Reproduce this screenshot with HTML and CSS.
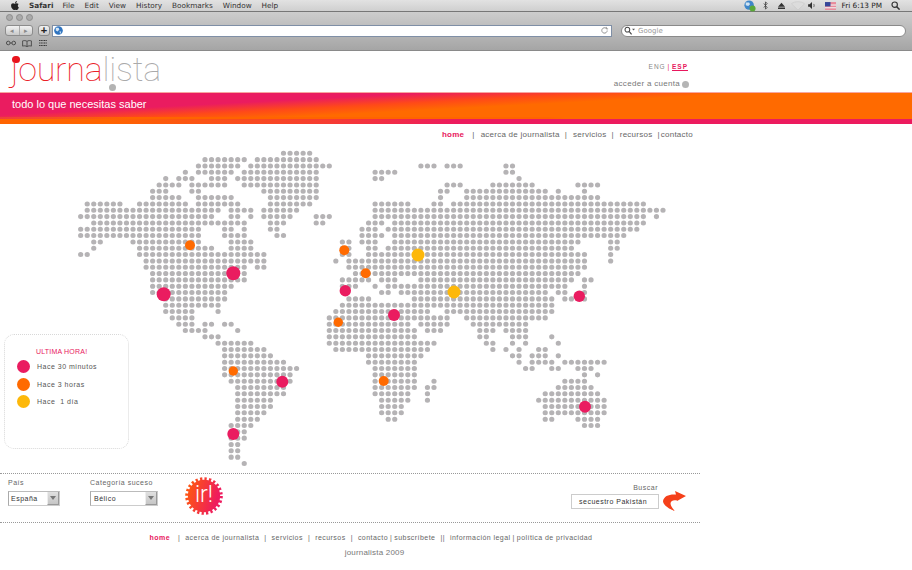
FILE: index.html
```html
<!DOCTYPE html>
<html lang="es">
<head>
<meta charset="utf-8">
<title>journalista</title>
<link rel="stylesheet" href="styles.css">
</head>
<body>
<div class="menubar">
  <svg class="apple" viewBox="0 0 14 16"><path d="M10.4 0c.1 1.1-.3 2-.9 2.700-.6.7-1.500 1.200-2.400 1.100-.1-1 .4-2 .9-2.600C8.600.6 9.600.1 10.400 0zM13.500 5.500c-1 .7-1.500 1.600-1.500 2.800 0 1.400.8 2.500 2 3-.3 1-.8 1.900-1.400 2.800-.8 1.100-1.500 1.900-2.500 1.900s-1.400-.6-2.600-.6-1.700.6-2.600.6c-1 0-1.800-1-2.600-2.100C.8 12.300 0 10.200 0 8.300c0-2.700 1.800-4.200 3.500-4.200 1.100 0 2 .7 2.700.7.700 0 1.700-.8 3-.8 1.600 0 3.300.7 4.300 1.500z"/></svg>
  <span class="menu-app">Safari</span>
  <span class="menu-item">File</span>
  <span class="menu-item">Edit</span>
  <span class="menu-item">View</span>
  <span class="menu-item">History</span>
  <span class="menu-item">Bookmarks</span>
  <span class="menu-item">Window</span>
  <span class="menu-item">Help</span>
  <div class="status">
    <svg class="st-globe" viewBox="0 0 14 14"><circle cx="6" cy="6" r="5.500" fill="#3f86c9"/><path d="M2 3h4l1 2-2 2-3-1zM7 8h3l-1 3-2-1z" fill="#cfe3f2"/><circle cx="10" cy="10" r="3.500" fill="#5aa83a"/></svg>
    <svg class="st-bt" viewBox="0 0 6 11"><path d="M1 3l4 5-2 2V1l2 2-4 5" fill="none" stroke="#444" stroke-width="1"/></svg>
    <svg class="st-eject" viewBox="0 0 9 9"><path d="M4.500 1L9 6H0zM0 7h9v2H0z" fill="#333"/></svg>
    <svg class="st-wifi" viewBox="0 0 16 11"><path d="M0 3.500C4 0 12 0 16 3.500L8 11z" fill="#dcdcdc" stroke="#c4c4c4" stroke-width=".6"/></svg>
    <svg class="st-vol" viewBox="0 0 10 9"><path d="M0 3h2l3-3v9L2 6H0z" fill="#333"/><path d="M7 2.500c1 1 1 3 0 4" fill="none" stroke="#444"/></svg>
    <svg class="st-flag" viewBox="0 0 14 10"><rect width="14" height="10" fill="#e88a9a"/><rect y="3" width="14" height="1.500" fill="#eee"/><rect y="6.500" width="14" height="1.500" fill="#eee"/><rect width="7" height="5.500" fill="#35479a"/></svg>
    <span class="st-clock">Fri 6:13 PM</span>
    <svg class="st-search" viewBox="0 0 11 11"><circle cx="4.500" cy="4.500" r="3.300" fill="none" stroke="#333" stroke-width="1.400"/><path d="M7 7l3.500 3.500" stroke="#333" stroke-width="1.800"/></svg>
  </div>
</div>

<div class="toolbar">
  <div class="lights"><i class="light"></i><i class="light"></i><i class="light"></i></div>
  <div class="address-row">
    <div class="nav-btns"><span class="nav-btn">◂</span><span class="nav-btn">▸</span></div>
    <span class="add-btn">+</span>
    <div class="url">
      <svg class="url-globe" viewBox="0 0 10 10"><circle cx="5" cy="5" r="4.800" fill="#2f74c0"/><path d="M2 2h3l1 2-2 2-2-1zM6 6h2l-1 3z" fill="#d5e6f5"/></svg>
      <svg class="url-reload" viewBox="0 0 10 10"><path d="M8 5a3 3 0 1 1-1-2.300M7 1v2.200H9" fill="none" stroke="#8a8a8a" stroke-width="1"/></svg>
    </div>
    <div class="search-field">
      <svg class="search-mag" viewBox="0 0 13 10"><circle cx="4" cy="4" r="2.800" fill="none" stroke="#444" stroke-width="1.200"/><path d="M6 6l3 3.500" stroke="#444" stroke-width="1.400"/><path d="M9.500 3h3.500l-1.700 2z" fill="#555"/></svg>
      <span class="search-hint">Google</span>
    </div>
  </div>
  <div class="bookmarks-row">
    <svg class="bm-glasses" viewBox="0 0 11 6"><circle cx="2.500" cy="3" r="2" fill="none" stroke="#444"/><circle cx="8.500" cy="3" r="2" fill="none" stroke="#444"/><path d="M4.500 3h2" stroke="#444"/></svg>
    <svg class="bm-book" viewBox="0 0 11 8"><path d="M5.500 1.500C4 .5 2 .5.500 1v6c1.500-.5 3.500-.5 5 .5 1.500-1 3.500-1 5-.5V1c-1.500-.5-3.500-.5-5 .5zM5.500 1.500v6" fill="none" stroke="#444"/></svg>
    <svg class="bm-grid" viewBox="0 0 9 7"><path d="M0 .5h9M0 3.500h9M0 6.500h9" stroke="#333" stroke-width="1.400" stroke-dasharray="1.300 .6"/></svg>
  </div>
</div>

<header class="site-header">
  <a class="logo"><span class="logo-red">journa</span><span class="logo-grey">lista</span></a>
  <div class="account">
    <div class="langs"><span class="lang">ENG</span> <b class="lang-sep">|</b> <a class="lang-on">ESP</a></div>
    <div class="login">acceder a cuenta <i class="login-dot"></i></div>
  </div>
</header>

<div class="banner"><span class="tagline">todo lo que necesitas saber</span></div>

<nav class="main-nav">
  <a class="current">home</a><span class="sep first">|</span><a>acerca de journalista</a><span class="sep">|</span><a>servicios</a><span class="sep">|</span><a>recursos</a><span class="sep tight">|</span><a>contacto</a>
</nav>

<main class="map-area">
  <svg class="world" viewBox="0 0 912 327" aria-label="mapa del mundo">
    <g transform="translate(80.67 7.3) scale(6.543 6.33)">
      <path class="dots" d="M31 0H35.010
M19 1H25.010M27 1H36.010
M18 2H24.010M26 2H38.010M52 2H54.010M56 2H58.010M65 2H66.010
M16 3h.01M18 3H23.010M25 3H36.010M45 3H48.010M65 3H66.010
M13 4h.01M15 4H17.010M20 4H22.010M24 4H36.010M45 4H46.010M67 4h.01
M12 5H15.010M17 5H22.010M25 5H36.010M56 5H58.010M63 5H69.010M76 5H79.010
M11 6H13.010M17 6H18.010M28 6H36.010M55 6H56.010M59 6H71.010M73 6h.01M77 6h.01
M11 7H15.010M18 7H23.010M29 7H36.010M55 7h.01M59 7H79.010
M1 8H6.010M9 8H16.010M18 8H24.010M29 8H35.010M45 8H50.010M54 8H55.010M57 8H86.010
M1 9H21.010M23 9H26.010M28 9H33.010M45 9H89.010
M0 10H20.010M23 10H24.010M26 10h.01M28 10H32.010M36 10H38.010M45 10H86.010M88 10h.01
M2 11H25.010M29 11H31.010M36 11H37.010M44 11H46.010M48 11H86.010
M0 12H18.010M22 12H23.010M25 12h.01M29 12H30.010M43 12H45.010M47 12H85.010
M0 13H18.010M22 13H25.010M30 13H31.010M43 13H46.010M48 13H83.010
M2 14H3.010M8 14H18.010M23 14H26.010M40 14H41.010M43 14H45.010M48 14H76.010M81 14H82.010
M2 15h.01M9 15H20.010M23 15H26.010M40 15H41.010M44 15H45.010M47 15H75.010M81 15H82.010
M0 16H1.010M9 16H28.010M40 16H41.010M44 16H77.010M81 16h.01
M10 17H28.010M39 17h.01M41 17H77.010M81 17h.01
M10 18H25.010M27 18H28.010M41 18H77.010
M11 19H25.010M42 19H76.010
M11 20H25.010M40 20H44.010M46 20H48.010M52 20H75.010M77 20H78.010
M11 21H23.010M40 21H42.010M45 21h.01M47 21H74.010M77 21h.01
M11 22H22.010M46 22H47.010M49 22H71.010M73 22H74.010M77 22h.01
M13 23H22.010M41 23H44.010M51 23H72.010M74 23H75.010M77 23h.01
M13 24H21.010M40 24H72.010
M13 25H17.010M21 25h.01M39 25H53.010M56 25H72.010
M14 26H17.010M38 26H56.010M59 26H71.010
M15 27H17.010M19 27H20.010M22 27H23.010M38 27H50.010M52 27H56.010M60 27H68.010
M16 28H19.010M24 28h.01M38 28H51.010M53 28H55.010M61 28H63.010M65 28H68.010
M19 29H21.010M38 29H51.010M61 29H62.010M66 29H68.010M72 29h.01
M21 30H26.010M38 30H54.010M62 30H63.010M66 30h.01M68 30h.01M73 30h.01
M22 31H28.010M39 31H53.010M63 31h.01M65 31h.01M67 31h.01M70 31H71.010
M22 32H29.010M44 32H52.010M66 32H67.010M69 32H71.010M73 32h.01
M22 33H31.010M44 33H51.010M67 33h.01M69 33H72.010M74 33H80.010
M22 34H33.010M45 34H51.010M68 34H69.010M72 34H73.010M76 34H78.010
M22 35H32.010M45 35H51.010M77 35h.01M79 35h.01
M23 36H32.010M45 36H51.010M54 36h.01M74 36H77.010
M24 37H31.010M45 37H51.010M53 37H54.010M73 37H78.010
M24 38H31.010M45 38H50.010M53 38h.01M71 38H79.010
M24 39H29.010M46 39H50.010M53 39h.01M70 39H80.010
M24 40H29.010M46 40H49.010M71 40H80.010
M24 41H28.010M46 41H49.010M71 41H80.010
M24 42H27.010M47 42H48.010M71 42H72.010M76 42H79.010
M23 43H26.010M77 43H79.010
M23 44H25.010
M23 45H25.010
M23 46H24.010
M23 47H24.010
M23 48H24.010
M25 49h.01"/>
    </g>
    <g transform="translate(0 -146)">
      <circle class="pin-orange" cx="190" cy="245.300" r="5"/>
      <circle class="pin-red" cx="233.300" cy="273.300" r="7"/>
      <circle class="pin-red" cx="163.700" cy="294.300" r="7"/>
      <circle class="pin-orange" cx="344.300" cy="250.300" r="5"/>
      <circle class="pin-orange" cx="365.700" cy="273.300" r="5"/>
      <circle class="pin-red" cx="345.300" cy="290.700" r="5.700"/>
      <circle class="pin-yellow" cx="418" cy="255" r="6.500"/>
      <circle class="pin-yellow" cx="454" cy="292" r="6.500"/>
      <circle class="pin-red" cx="579.300" cy="296.300" r="5.700"/>
      <circle class="pin-red" cx="394" cy="315" r="6"/>
      <circle class="pin-orange" cx="338.300" cy="322.300" r="4.700"/>
      <circle class="pin-orange" cx="383.700" cy="381" r="5"/>
      <circle class="pin-red" cx="585" cy="406.700" r="6"/>
      <circle class="pin-orange" cx="233.300" cy="371" r="4.700"/>
      <circle class="pin-red" cx="282.300" cy="381.700" r="6"/>
      <circle class="pin-red" cx="233.300" cy="434" r="6"/>
    </g>
  </svg>
  <aside class="legend">
    <h2 class="legend-title">ULTIMA HORA!</h2>
    <div class="legend-row"><i class="swatch red"></i><span>Hace 30 minutos</span></div>
    <div class="legend-row"><i class="swatch orange"></i><span>Hace 3 horas</span></div>
    <div class="legend-row"><i class="swatch yellow"></i><span>Hace&nbsp; 1 día</span></div>
  </aside>
</main>

<section class="filters">
  <div class="field country">
    <label class="field-label">País</label>
    <div class="select"><span class="select-value">España</span><i class="select-btn"></i></div>
  </div>
  <div class="field category">
    <label class="field-label">Categoría suceso</label>
    <div class="select"><span class="select-value">Bélico</span><i class="select-btn"></i></div>
  </div>
  <div class="go">
    <svg class="burst" viewBox="0 0 40 40">
      <defs><linearGradient id="burstfill" x1="0" y1="0" x2="1" y2="0.300"><stop offset="0" stop-color="#ff5c0c"/><stop offset="1" stop-color="#ee1b5e"/></linearGradient></defs>
      <circle cx="20" cy="20" r="17" fill="url(#burstfill)"/>
      <circle cx="20" cy="20" r="18" fill="none" stroke="url(#burstfill)" stroke-width="3.600" stroke-dasharray="2.400 2.310"/>
    </svg>
    <span class="go-text">ir!</span>
  </div>
  <div class="search">
    <label class="search-label">Buscar</label>
    <div class="search-input">secuestro Pakistán</div>
  </div>
  <svg class="arrow" viewBox="0 0 28 24"><path d="M26 8L15 3l1 3.500C9 6 4 8 3 13c0 4 6 8 12 10-4-4-6-8-3-10 1-1 3-1 5-.5V13z" fill="#f5401a"/></svg>
</section>

<footer class="site-footer">
  <nav class="foot-nav"><a class="current">home</a><span class="sep first">|</span><a>acerca de journalista</a><span class="sep">|</span><a>servicios</a><span class="sep">|</span><a>recursos</a><span class="sep">|</span><a>contacto</a><span class="sep tight">|</span><a>subscríbete</a><span class="sep">||</span><a>información legal</a><span class="sep tight">|</span><a>política de privacidad</a></nav>
  <p class="copy">journalista 2009</p>
</footer>
</body>
</html>
```

FILE: styles.css
```css
* { box-sizing: border-box; }
html, body { margin: 0; padding: 0; background: #fff; }
body { width: 912px; height: 570px; overflow: hidden; font-family: "Liberation Sans", Arial, sans-serif; color: #555; }
a { color: inherit; text-decoration: none; }
i { display: block; }

/* mac menu bar */
.menubar { height: 12px; display: flex; align-items: center; background: linear-gradient(#e2e2e2, #cfcfcf); border-bottom: 1px solid #777; font: 7.300px "DejaVu Sans", sans-serif; color: #333; }
.apple { width: 8px; height: 9px; margin-left: 11px; fill: #222; }
.menu-app { font-weight: bold; margin-left: 10px; margin-right: 9px; }
.menu-item { margin-right: 10px; }
.status { margin-left: auto; display: flex; align-items: center; color: #222; }
.st-globe { width: 12px; height: 12px; margin-right: 7px; }
.st-bt { width: 5px; height: 9px; margin-right: 10px; }
.st-eject { width: 7px; height: 7px; margin-right: 6px; }
.st-wifi { width: 14px; height: 9px; margin-right: 3px; }
.st-vol { width: 8px; height: 7px; margin-right: 9px; }
.st-flag { width: 11px; height: 8px; margin-right: 6px; }
.st-clock { margin-right: 9px; }
.st-search { width: 9px; height: 9px; margin-right: 12px; }

/* browser toolbar */
.toolbar { height: 39px; background: linear-gradient(#cdcdcd, #a5a5a5); border-bottom: 1px solid #8a8a8a; }
.lights { display: flex; gap: 3px; padding-left: 6px; height: 11px; align-items: center; }
.light { width: 7px; height: 7px; border-radius: 50%; background: #aaa; border: 1px solid #8d8d8d; }
.address-row { display: flex; align-items: center; height: 15px; padding: 0 6px 0 5px; }
.nav-btns { display: flex; width: 28px; height: 11px; border-radius: 3px; overflow: hidden; border: 1px solid #8c8c8c; background: linear-gradient(#f2f2f2, #c8c8c8); }
.nav-btn { flex: 1; text-align: center; font-size: 7px; line-height: 9px; color: #8a8a8a; border-right: 1px solid #aaa; }
.nav-btn:last-child { border-right: 0; }
.add-btn { width: 12px; height: 11px; margin-left: 5px; border: 1px solid #8c8c8c; border-radius: 3px; background: linear-gradient(#f2f2f2, #c8c8c8); color: #222; font: bold 11px/9px "Liberation Sans", sans-serif; text-align: center; }
.url { width: 560px; height: 12px; margin-left: 2px; display: flex; align-items: center; justify-content: space-between; background: #fff; border: 1px solid #7f8fa6; padding: 0 2px 0 1px; }
.url-globe { width: 9px; height: 9px; }
.url-reload { width: 9px; height: 9px; }
.search-field { flex: 1; height: 12px; margin-left: 9px; display: flex; align-items: center; padding-left: 2px; background: #fff; border: 1px solid #8a8a8a; border-radius: 6px; }
.search-mag { width: 11px; height: 9px; }
.search-hint { margin-left: 3px; font: 7px "DejaVu Sans", sans-serif; color: #9a9a9a; }
.bookmarks-row { display: flex; align-items: center; height: 10px; padding-left: 6px; }
.bm-glasses { width: 10px; height: 6px; }
.bm-book { width: 10px; height: 7px; margin-left: 6px; }
.bm-grid { width: 8px; height: 6px; margin-left: 7px; }

/* site header */
.site-header { height: 41px; display: flex; justify-content: space-between; }
.logo { position: relative; display: block; margin-left: 11px; font: 100 34px/37px Roboto, sans-serif; letter-spacing: -.2px; white-space: nowrap; }
.logo-red { color: #ea2027; }
.logo-grey { color: #aaa; }
.logo::before { content: ""; position: absolute; left: 1px; top: 4.500px; width: 7.500px; height: 7.500px; border-radius: 50%; background: #e8141c; }
.logo::after { content: ""; position: absolute; left: 97.500px; top: 32.500px; width: 7px; height: 7px; border-radius: 50%; background: #b3b3b3; }
.account { flex: 0 0 auto; width: 321px; padding-right: 223px; display: flex; flex-direction: column; align-items: flex-end; }
.langs { margin-top: 11px; font-size: 6.500px; line-height: 10px; letter-spacing: 1px; word-spacing: -1px; color: #888; margin-right: 1px; }
.lang-sep { color: #e8175d; font-weight: normal; }
.lang-on { color: #e8175d; font-weight: bold; text-decoration: underline; }
.login { display: flex; align-items: center; margin-top: 7px; font-size: 8px; line-height: 10px; letter-spacing: .3px; color: #777; }
.login-dot { width: 7px; height: 7px; margin-left: 2px; border-radius: 50%; background: #b5b5b5; }

/* banner */
.banner { height: 32px; padding: 1px 0 0 12px; border-top: 1px solid #f7a7a0;
  background:
    linear-gradient(90deg, #ff6400 12%, #f63c32 36%, #ec1b5e 50%) bottom / 100% 5px no-repeat,
    linear-gradient(90deg, #ef3e3e 0, #ff6400 14%, #ff6400 60%, rgba(255,100,0,0) 62%) 0 24px / 100% 3px no-repeat,
    linear-gradient(177deg, #ea1c60 28%, #ff4a18 40%, #ff6a00 50%); }
.tagline { font: 300 11px/14px "Liberation Sans", sans-serif; color: #fff; }

/* nav */
.main-nav { height: 22px; padding: 6px 219px 0 0; display: flex; justify-content: flex-end; font-size: 8px; line-height: 10px; letter-spacing: .25px; color: #666; white-space: nowrap; }
.current { color: #e8175d; font-weight: bold; }
.sep { margin: 0 6px 0 5px; }
.sep.first { margin: 0 6px 0 8px; }
.sep.tight { margin: 0 1px 0 5px; }

/* map */
.map-area { position: relative; height: 327px; }
.world { display: block; width: 912px; height: 327px; }
.dots { fill: none; stroke: #b5b3b5; stroke-width: .8; stroke-linecap: round; stroke-dasharray: 0 1; }
.pin-red { fill: #ea1c60; }
.pin-orange { fill: #ff6a00; }
.pin-yellow { fill: #fdb80a; }

.legend { position: absolute; left: 4px; top: 188px; width: 125px; height: 115px; padding-top: 12px; border: 1px dotted #d8d8d8; border-radius: 10px; background: #fff; }
.legend-title { margin: 0 0 2px 31px; font-size: 7px; line-height: 9px; font-weight: normal; color: #e8175d; letter-spacing: .2px; }
.legend-row { display: flex; align-items: center; height: 17.500px; padding-left: 12px; font-size: 7px; letter-spacing: .5px; color: #555; }
.swatch { width: 13px; height: 13px; margin-right: 7px; border-radius: 50%; }
.swatch.red { background: #ea1c60; }
.swatch.orange { background: #ff6a00; }
.swatch.yellow { background: #fdb80a; }

/* filters */
.filters { width: 700px; height: 50px; display: flex; border-top: 1px dotted #999; border-bottom: 1px dotted #999; }
.field { padding-top: 4px; }
.country { width: 52px; margin-left: 8px; }
.category { width: 68px; margin-left: 30px; }
.field-label { display: block; height: 13px; font-size: 7px; line-height: 9px; letter-spacing: .5px; color: #666; white-space: nowrap; }
.select { display: flex; height: 15px; border: 1px solid #ccc; border-top-color: #bbb; border-left-color: #aaa; }
.select-value { flex: 1; padding-left: 2px; font-size: 7px; line-height: 13px; letter-spacing: .5px; color: #333; }
.category .select-value { padding-left: 3px; }
.select-btn { position: relative; width: 12px; background: linear-gradient(#e0e0e0, #c6c6c6); border-left: 1px solid #eee; border-right: 1px solid #999; border-bottom: 1px solid #999; }
.select-btn::after { content: ""; position: absolute; left: 2px; top: 4px; border: 3px solid transparent; border-top: 4px solid #777; }
.go { position: relative; width: 38px; height: 38px; margin: 3px 0 0 27px; }
.burst { display: block; width: 38px; height: 38px; }
.go-text { position: absolute; left: 0; right: 0; top: 5px; text-align: center; font: 300 23px/26px Roboto, sans-serif; color: #fff; }
.search { margin-left: auto; padding-top: 9px; width: 88px; text-align: right; }
.search-label { display: block; height: 11px; padding-right: 1px; font-size: 7px; line-height: 9px; letter-spacing: .5px; color: #666; }
.search-input { height: 15px; padding-left: 7px; text-align: left; border: 1px solid #ccc; font-size: 7px; line-height: 13px; letter-spacing: .5px; color: #333; white-space: nowrap; }
.arrow { width: 28px; height: 24px; margin: 14px 12px 0 1px; }

/* footer */
.site-footer { width: 742px; padding-top: 10px; text-align: center; }
.foot-nav { display: flex; justify-content: center; font-size: 7px; line-height: 9px; letter-spacing: .45px; color: #666; white-space: nowrap; }
.foot-nav .sep { margin: 0 5px 0 5px; }
.foot-nav .sep.first { margin: 0 5px 0 8px; }
.foot-nav .sep.tight { margin: 0 2px 0 2px; }
.copy { margin: 6px 0 0 7px; font-size: 8px; line-height: 10px; letter-spacing: .2px; color: #777; }
```
